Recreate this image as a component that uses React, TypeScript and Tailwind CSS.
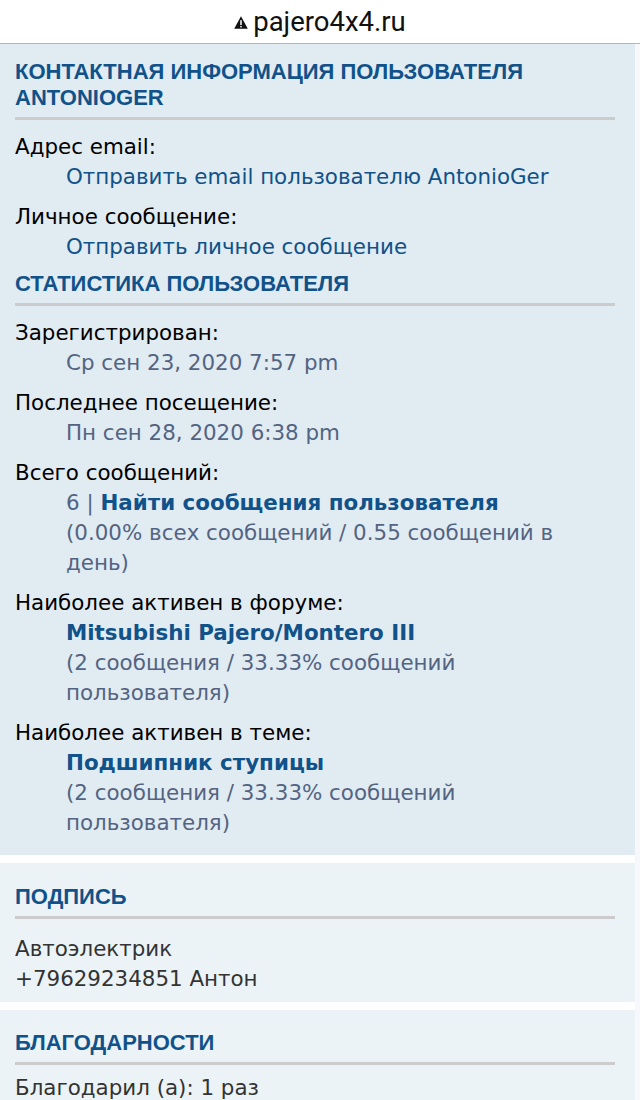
import React from 'react';

const body = { fontFamily: '"DejaVu Sans", Verdana, sans-serif' };
const head = { fontFamily: '"Liberation Sans", Arial, sans-serif' };

function Heading({ children }: { children: React.ReactNode }) {
  return (
    <h3
      style={head}
      className="text-[22px] leading-[26px] font-bold uppercase text-[#105289] border-b-[3px] border-[#cccccc] pb-[6px] mr-[5px]"
    >
      {children}
    </h3>
  );
}

function Field({ label, children }: { label: string; children: React.ReactNode }) {
  return (
    <div className="mt-[10px] first:mt-0">
      <div className="text-black">{label}</div>
      <div className="pl-[51px]">{children}</div>
    </div>
  );
}

export default function App() {
  return (
    <div className="w-[640px] bg-white text-[21.4px] leading-[30px]" style={body}>
      <div className="h-[44px] flex items-center justify-center border-b border-[#b5b5b5] bg-white">
        <span className="flex items-center gap-[5px] text-[27.5px] text-[#111]" style={{ fontFamily: 'Roboto, "Noto Sans", sans-serif' }}>
          <svg viewBox="0 0 14 13" className="w-[14px] h-[13px] shrink-0 mt-[2px]">
            <path d="M7 0.3 L13.8 12.7 H0.2 Z" fill="#111" />
            <rect x="6.25" y="4.2" width="1.5" height="4.8" fill="#fff" />
            <rect x="6.25" y="9.9" width="1.5" height="1.5" fill="#fff" />
          </svg>
          pajero4x4.ru
        </span>
      </div>

      <div className="flex">
        <div className="w-[635px] flex flex-col gap-[8px] bg-white">
          <div className="bg-[#e1ebf2] pl-[15px] pr-[15px] pt-[15px] pb-[17px]">
            <Heading>
              Контактная информация пользователя AntonioGer
            </Heading>
            <div className="mt-[12px] mb-[9px]">
              <Field label="Адрес email:">
                <a className="text-[#105289]">Отправить email пользователю AntonioGer</a>
              </Field>
              <Field label="Личное сообщение:">
                <a className="text-[#105289]">Отправить личное сообщение</a>
              </Field>
            </div>
            <Heading>Статистика пользователя</Heading>
            <div className="mt-[12px] text-[#536482]">
              <Field label="Зарегистрирован:">Ср сен 23, 2020 7:57 pm</Field>
              <Field label="Последнее посещение:">Пн сен 28, 2020 6:38 pm</Field>
              <Field label="Всего сообщений:">
                6 | <a className="font-bold text-[#105289]">Найти сообщения пользователя</a>
                <br />
                (0.00% всех сообщений / 0.55 сообщений в день)
              </Field>
              <Field label="Наиболее активен в форуме:">
                <a className="font-bold text-[#105289]">Mitsubishi Pajero/Montero III</a>
                <br />
                (2 сообщения / 33.33% сообщений пользователя)
              </Field>
              <Field label="Наиболее активен в теме:">
                <a className="font-bold text-[#105289]">Подшипник ступицы</a>
                <br />
                (2 сообщения / 33.33% сообщений пользователя)
              </Field>
            </div>
          </div>

          <div className="bg-[#ecf3f7] pl-[15px] pr-[15px] pt-[21px] pb-[8px]">
            <Heading>Подпись</Heading>
            <div className="mt-[15px] text-[#333333]">
              Автоэлектрик
              <br />
              +79629234851 Антон
            </div>
          </div>

          <div className="bg-[#ecf3f7] pl-[15px] pr-[15px] pt-[20px] pb-[20px]">
            <Heading>Благодарности</Heading>
            <div className="mt-[8px] text-[#333333]">Благодарил (а): 1 раз</div>
          </div>
        </div>
        <div className="flex-1 bg-[#f6f8fb]" />
      </div>
    </div>
  );
}
